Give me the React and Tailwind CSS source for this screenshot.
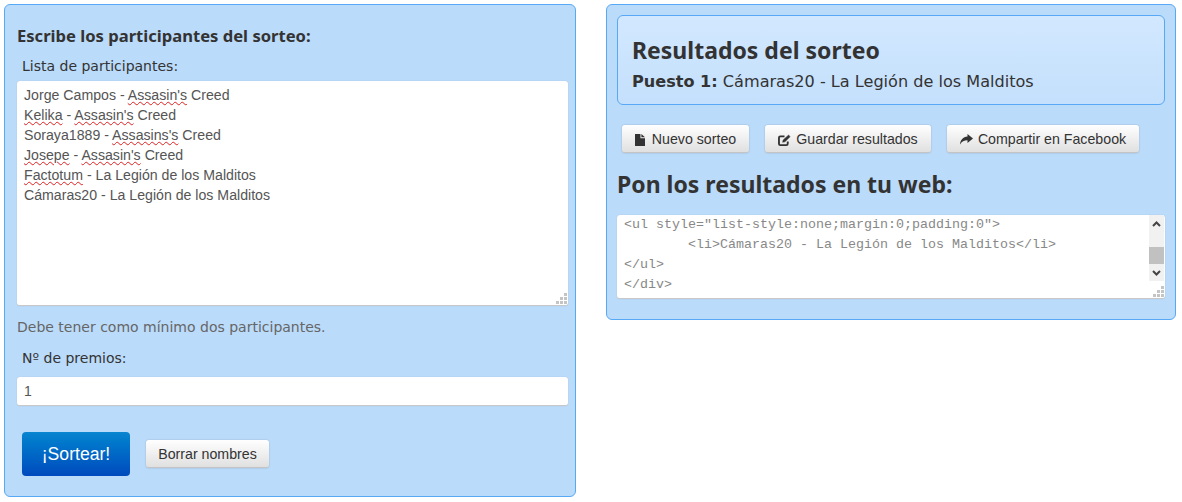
const SANS = 'font-["Liberation_Sans",Arial,sans-serif]'

function Typo({ children }) {
  return <span className="underline decoration-wavy decoration-[#e02020] decoration-1 underline-offset-[1px]">{children}</span>
}

function Grip() {
  return (
    <svg className="absolute right-0 bottom-0" width="13" height="13" viewBox="0 0 13 13" fill="#c4c4c4">
      <rect x="9" y="1" width="3" height="3" />
      <rect x="5" y="5" width="3" height="3" />
      <rect x="9" y="5" width="3" height="3" />
      <rect x="1" y="9" width="3" height="3" />
      <rect x="5" y="9" width="3" height="3" />
      <rect x="9" y="9" width="3" height="3" />
    </svg>
  )
}

function Btn({ children, className = '' }) {
  return (
    <button className={`h-[28px] pt-[2px] flex items-center justify-center rounded-[3px] bg-gradient-to-b from-white to-[#e0e0e0] border-b border-[#c4c4c4] shadow-[0_0_2px_rgba(0,0,0,0.2)] text-[14.2px] text-[#333] ${SANS} ${className}`}>
      {children}
    </button>
  )
}

function ScrollBar() {
  return (
    <div className="w-[15px] h-[66px] bg-[#f1f1f1] flex flex-col items-center shrink-0">
      <svg className="mt-[6px] mb-[20px]" width="9" height="6" viewBox="0 0 9 6" fill="none" stroke="#444" strokeWidth="2"><path d="M1 5l3.5-3.5L8 5" /></svg>
      <div className="w-[15px] h-[17px] bg-[#c1c1c1]" />
      <svg className="mt-[6px]" width="9" height="6" viewBox="0 0 9 6" fill="none" stroke="#444" strokeWidth="2"><path d="M1 1l3.5 3.5L8 1" /></svg>
    </div>
  )
}

export default function App() {
  const heading = 'font-["Noto_Sans",sans-serif] font-bold text-[#333]'
  const label = 'font-["DejaVu_Sans",sans-serif] text-[14px] text-[#333]'
  const field = 'bg-white rounded-[3px] border-b border-[#c8c8c8] shadow-[0_0_1px_rgba(0,0,0,0.2)]'
  return (
    <div className="w-[1182px] h-[502px] bg-white flex items-start gap-[30px] pl-[4px] pt-[4px] overflow-hidden">
      {/* Participantes */}
      <div className="w-[572px] h-[493px] shrink-0 bg-[#bbdbfa] border border-[#58a9f5] rounded-[6px] pl-[12px] pr-[7px] pt-[21px]">
        <h2 className={`${heading} text-[16.6px] leading-[20px]`}>Escribe los participantes del sorteo:</h2>
        <label className={`${label} block leading-[18px] mt-[11px] ml-[5px]`}>Lista de participantes:</label>
        <div className={`relative mt-[6px] h-[225px] ${field} px-[7px] pt-[4px] text-[14.15px] leading-[20px] text-[#555] ${SANS}`}>
          <div>Jorge Campos - <Typo>Assasin's</Typo> Creed</div>
          <div><Typo>Kelika</Typo> - <Typo>Assasin's</Typo> Creed</div>
          <div>Soraya1889 - <Typo>Assasins's</Typo> Creed</div>
          <div><Typo>Josepe</Typo> - <Typo>Assasin's</Typo> Creed</div>
          <div><Typo>Factotum</Typo> - La Legión de los Malditos</div>
          <div>Cámaras20 - La Legión de los Malditos</div>
          <Grip />
        </div>
        <p className={`${label} text-[#666] leading-[18px] mt-[12px]`}>Debe tener como mínimo dos participantes.</p>
        <label className={`${label} block leading-[18px] mt-[13px] ml-[5px]`}>Nº de premios:</label>
        <div className={`mt-[10px] h-[29px] pt-[1px] ${field} px-[7px] flex items-center text-[14px] text-[#555] ${SANS}`}>1</div>
        <div className="flex items-center mt-[26px] ml-[5px]">
          <button className={`w-[108px] h-[44px] pt-[1px] rounded-[4px] bg-gradient-to-b from-[#0a85cf] to-[#0049bd] text-white text-[17.6px] ${SANS}`}>¡Sortear!</button>
          <Btn className="w-[123px] ml-[16px]">Borrar nombres</Btn>
        </div>
      </div>

      {/* Resultados */}
      <div className="w-[570px] h-[316px] shrink-0 bg-[#bbdbfa] border border-[#58a9f5] rounded-[6px] px-[10px] pt-[10px]">
        <div className="h-[90px] rounded-[6px] border border-[#58a9f5] bg-gradient-to-b from-[#d2e8ff] to-[#c4e0fc] px-[14px] pt-[19px]">
          <h1 className={`${heading} text-[23px] leading-[30px]`}>Resultados del sorteo</h1>
          <p className="font-['DejaVu_Sans',sans-serif] text-[16.1px] leading-[20px] mt-[7px] text-[#333]"><b>Puesto 1:</b> Cámaras20 - La Legión de los Malditos</p>
        </div>
        <div className="flex mt-[20px] ml-[5px] gap-[16px]">
          <Btn className="w-[127px] gap-[7px]">
            <svg width="10" height="12" viewBox="0 0 11 13" fill="#333"><path d="M0 0h6v4.500h5V13H0zM7 0l4 3.500H7z" /></svg>
            Nuevo sorteo
          </Btn>
          <Btn className="w-[166px] gap-[5px]">
            <svg width="13" height="12" viewBox="0 0 14 13" fill="none" stroke="#333"><path d="M7 2.500H2.500a1.500 1.500 0 0 0-1.500 1.500v6.500a1.500 1.500 0 0 0 1.500 1.500H9a1.500 1.500 0 0 0 1.500-1.500V8" strokeWidth="2" /><path d="M5 9l.5-2.500L11.500 1 13 3 7.500 8.500z" fill="#333" strokeWidth="0.5" /></svg>
            Guardar resultados
          </Btn>
          <Btn className="w-[192px] gap-[5px]">
            <svg width="13" height="11" viewBox="0 0 13 11" fill="#333"><path d="M7.500 0L13 4.500 7.500 9V6.300C4 6.300 1.800 7.400 0 10.500 .4 6 3 3 7.500 2.600z" /></svg>
            Compartir en Facebook
          </Btn>
        </div>
        <h2 className={`${heading} text-[23px] leading-[30px] mt-[16px]`}>Pon los resultados en tu web:</h2>
        <div className={`relative mt-[16px] h-[84px] ${field} flex items-start pl-[7px]`}>
          <pre className="flex-1 font-['Liberation_Mono',monospace] text-[13.33px] leading-[20px] text-[#888] overflow-hidden">{`<ul style="list-style:none;margin:0;padding:0">
        <li>Cámaras20 - La Legión de los Malditos</li>
</ul>
</div>`}</pre>
          <div className="mr-[1px]"><ScrollBar /></div>
          <Grip />
        </div>
      </div>
    </div>
  )
}
